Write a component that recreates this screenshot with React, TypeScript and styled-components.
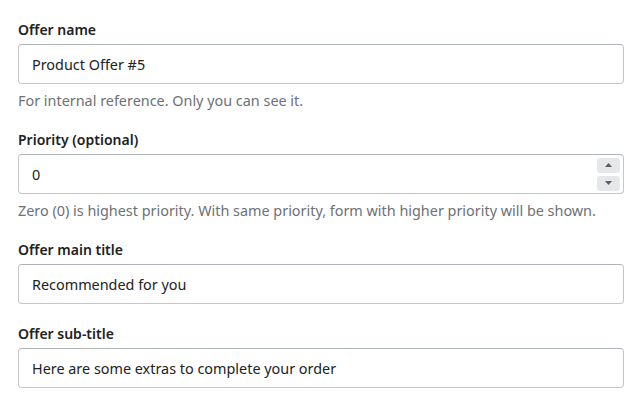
import React from "react";
import styled, { createGlobalStyle } from "styled-components";

const Global = createGlobalStyle`
  html, body { margin: 0; padding: 0; background: #ffffff; }
  body { font-family: "Noto Sans", "Open Sans", sans-serif; color: #202223; }
  * { box-sizing: border-box; }
`;

const Form = styled.div`
  display: flex;
  flex-direction: column;
  gap: 20px;
  padding: 20px 16px 0 18px;
  width: 640px;
`;

const Field = styled.div`
  display: flex;
  flex-direction: column;
`;

const Label = styled.label`
  font-size: 14px;
  line-height: 20px;
  font-weight: 600;
  color: #202223;
  margin-bottom: 4px;
`;

const InputWrap = styled.div`
  position: relative;
  display: flex;
  align-items: center;
  height: 40px;
  border: 1px solid #c4c7ca;
  border-top-color: #aeb4b9;
  border-radius: 4px;
  background: #ffffff;
`;

const Input = styled.input`
  flex: 1;
  min-width: 0;
  height: 100%;
  border: none;
  outline: none;
  background: transparent;
  padding: 0 12px 0 13px;
  font-family: inherit;
  font-size: 14.4px;
  color: #202223;
`;

const Spinner = styled.div`
  display: flex;
  flex-direction: column;
  gap: 3px;
  margin-right: 3px;
`;

const SpinButton = styled.div`
  width: 23px;
  height: 15px;
  border-radius: 3px;
  background: #e6e7e8;
  display: flex;
  align-items: center;
  justify-content: center;
`;

const Help = styled.div`
  margin-top: 7px;
  font-size: 14.4px;
  line-height: 19px;
  color: #6d7175;
`;

function Arrow({ up }: { up?: boolean }) {
  return (
    <svg width="7" height="4" viewBox="0 0 7 4">
      {up ? <path d="M0 4 L3.5 0 L7 4 Z" fill="#5c5f62" /> : <path d="M0 0 L3.5 4 L7 0 Z" fill="#5c5f62" />}
    </svg>
  );
}

export default function App() {
  return (
    <>
      <Global />
      <Form>
        <Field>
          <Label>Offer name</Label>
          <InputWrap>
            <Input defaultValue="Product Offer #5" />
          </InputWrap>
          <Help>For internal reference. Only you can see it.</Help>
        </Field>
        <Field>
          <Label>Priority (optional)</Label>
          <InputWrap>
            <Input defaultValue="0" />
            <Spinner>
              <SpinButton><Arrow up /></SpinButton>
              <SpinButton><Arrow /></SpinButton>
            </Spinner>
          </InputWrap>
          <Help>Zero (0) is highest priority. With same priority, form with higher priority will be shown.</Help>
        </Field>
        <Field>
          <Label>Offer main title</Label>
          <InputWrap>
            <Input defaultValue="Recommended for you" />
          </InputWrap>
        </Field>
        <Field>
          <Label>Offer sub-title</Label>
          <InputWrap>
            <Input defaultValue="Here are some extras to complete your order" />
          </InputWrap>
        </Field>
      </Form>
    </>
  );
}
